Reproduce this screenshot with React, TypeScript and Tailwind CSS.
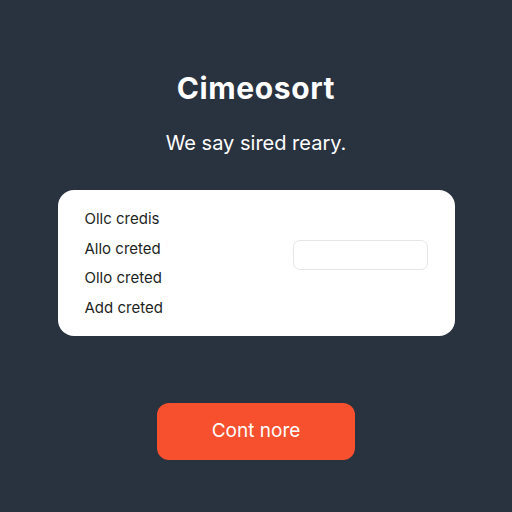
export default function App() {
  const rows = ["Ollc credis", "Allo creted", "Ollo creted", "Add creted"];
  return (
    <div
      className="w-[512px] h-[512px] bg-[#29323f] flex flex-col items-center"
      style={{ fontFamily: "Inter, 'Noto Sans', sans-serif" }}
    >
      <h1 className="mt-[70px] text-[30px] leading-[36px] font-bold text-white tracking-[0.6px]">
        Cimeosort
      </h1>
      <p className="mt-[23px] text-[20px] leading-[28px] text-white">We say sired reary.</p>
      <div className="mt-[33px] w-[397px] h-[146px] bg-white rounded-[16px] flex items-center pl-[27px] pr-[27px]">
        <div className="flex flex-col gap-[10.5px]">
          {rows.map((r) => (
            <span key={r} className="text-[15px] leading-[19px] text-[#1d1f23]">
              {r}
            </span>
          ))}
        </div>
        <div className="ml-auto mb-[16px] w-[135px] h-[30px] rounded-[7px] border border-[#e6e6e6] bg-white" />
      </div>
      <button className="mt-[67px] w-[198px] h-[57px] rounded-[12px] bg-[#f6502f] text-white text-[19px]">
        Cont nore
      </button>
    </div>
  );
}
